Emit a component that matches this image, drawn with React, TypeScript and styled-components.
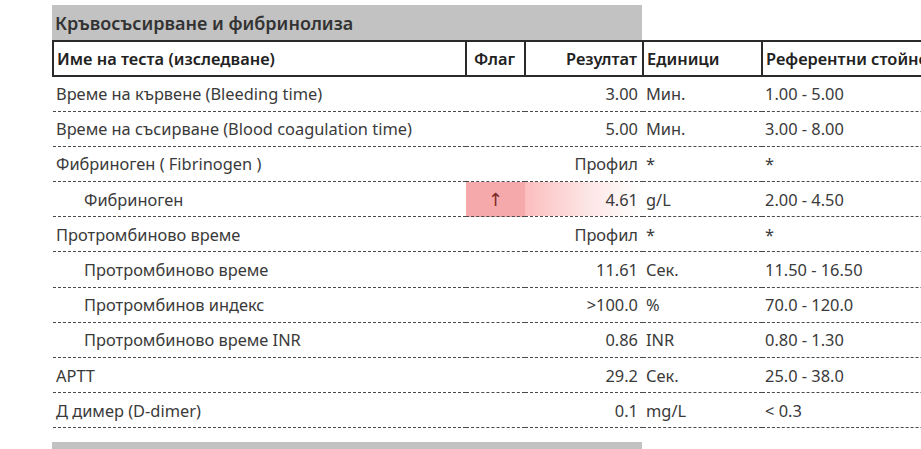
import styled, { createGlobalStyle } from "styled-components";

const GlobalStyle = createGlobalStyle`
    html, body {
        margin: 0;
        padding: 0;
        background: #FFFFFF;
        overflow: hidden;
    }
    body {
        font-family: "Noto Sans", "Open Sans", sans-serif;
        color: #3A3A3A;
    }
`;

const Page = styled.div`
    width: 921px;
    height: 449px;
    padding: 5px 0 0 52px;
    box-sizing: border-box;
    overflow: hidden;
`;

const SectionTitle = styled.div`
    width: 590px;
    height: 35px;
    background-color: #C2C2C2;
    display: flex;
    align-items: center;
    padding-left: 3px;
    box-sizing: border-box;
    font-size: 18px;
    font-weight: 600;
    color: #333333;
`;

const Table = styled.table`
    width: 920px;
    table-layout: fixed;
    border-collapse: collapse;
    font-size: 16.4px;
`;

const HeadCell = styled.th<{ $align?: string }>`
    height: 33px;
    padding: 0 5px 0 3px;
    border: 2px solid #2A2A2A;
    border-right-width: 1.5px;
    text-align: ${(p) => p.$align || "left"};
    font-weight: 600;
    color: #222222;
    white-space: nowrap;
    overflow: hidden;
`;

const Row = styled.tr`
    height: 35.2px;
    border-bottom: 1px dashed #4A4A4A;
`;

const Cell = styled.td<{ $align?: string; $indent?: boolean }>`
    padding: 0 5px 0 ${(p) => (p.$indent ? "31px" : "3px")};
    text-align: ${(p) => p.$align || "left"};
    white-space: nowrap;
    overflow: hidden;
`;

const FlagCell = styled.td<{ $on?: boolean }>`
    text-align: center;
    font-family: "DejaVu Sans", sans-serif;
    font-size: 18px;
    color: #7A2A2A;
    background: ${(p) => (p.$on ? "#F6A9AA" : "transparent")};
`;

const ResultCell = styled(Cell)<{ $on?: boolean }>`
    background: ${(p) =>
        p.$on ? "linear-gradient(to right, #FBBDBE 0%, #FDE3E3 50%, #FFFFFF 100%)" : "transparent"};
`;

const FooterBar = styled.div`
    width: 590px;
    height: 8px;
    margin-top: 14px;
    background-color: #C2C2C2;
`;

type Test = {
    name: string;
    sub?: boolean;
    flag?: string;
    result: string;
    unit: string;
    ref: string;
};

const tests: Test[] = [
    { name: "Време на кървене (Bleeding time)", result: "3.00", unit: "Мин.", ref: "1.00 - 5.00" },
    { name: "Време на съсирване (Blood coagulation time)", result: "5.00", unit: "Мин.", ref: "3.00 - 8.00" },
    { name: "Фибриноген ( Fibrinogen )", result: "Профил", unit: "*", ref: "*" },
    { name: "Фибриноген", sub: true, flag: "↑", result: "4.61", unit: "g/L", ref: "2.00 - 4.50" },
    { name: "Протромбиново време", result: "Профил", unit: "*", ref: "*" },
    { name: "Протромбиново време", sub: true, result: "11.61", unit: "Сек.", ref: "11.50 - 16.50" },
    { name: "Протромбинов индекс", sub: true, result: ">100.0", unit: "%", ref: "70.0 - 120.0" },
    { name: "Протромбиново време INR", sub: true, result: "0.86", unit: "INR", ref: "0.80 - 1.30" },
    { name: "APTT", result: "29.2", unit: "Сек.", ref: "25.0 - 38.0" },
    { name: "Д димер (D-dimer)", result: "0.1", unit: "mg/L", ref: "< 0.3" },
];

export default function App() {
    return (
        <Page>
            <GlobalStyle />
            <SectionTitle>Кръвосъсирване и фибринолиза</SectionTitle>
            <Table>
                <colgroup>
                    <col style={{ width: 413 }} />
                    <col style={{ width: 59 }} />
                    <col style={{ width: 118 }} />
                    <col style={{ width: 119 }} />
                    <col style={{ width: 211 }} />
                </colgroup>
                <thead>
                    <tr>
                        <HeadCell>Име на теста (изследване)</HeadCell>
                        <HeadCell $align="center">Флаг</HeadCell>
                        <HeadCell $align="right">Резултат</HeadCell>
                        <HeadCell>Единици</HeadCell>
                        <HeadCell>Референтни стойности</HeadCell>
                    </tr>
                </thead>
                <tbody>
                    {tests.map((t, i) => (
                        <Row key={i}>
                            <Cell $indent={t.sub}>{t.name}</Cell>
                            <FlagCell $on={!!t.flag}>{t.flag}</FlagCell>
                            <ResultCell $align="right" $on={!!t.flag}>{t.result}</ResultCell>
                            <Cell>{t.unit}</Cell>
                            <Cell>{t.ref}</Cell>
                        </Row>
                    ))}
                </tbody>
            </Table>
            <FooterBar />
        </Page>
    );
}
